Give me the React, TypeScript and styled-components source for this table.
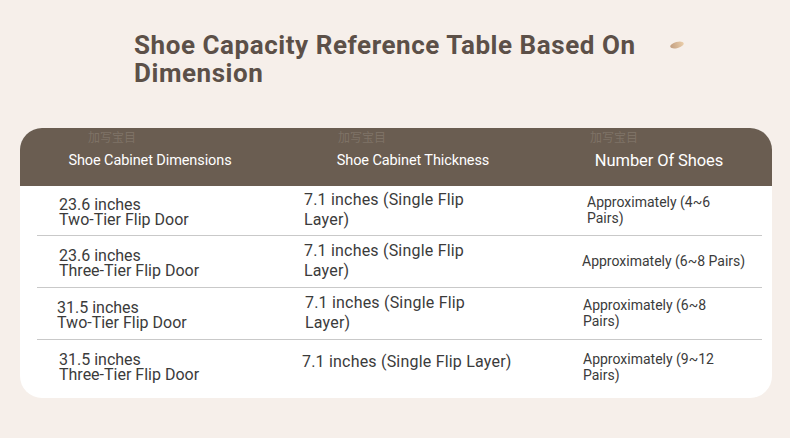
import React from "react";
import styled, { createGlobalStyle } from "styled-components";

const Global = createGlobalStyle`
  html, body { margin: 0; padding: 0; background: #f6efea; }
  body { font-family: Roboto, "Noto Sans", sans-serif; }
`;

const Page = styled.div`
  width: 790px;
  height: 438px;
  background: #f6efea;
  box-sizing: border-box;
  padding: 31px 18px 0 20px;
  display: flex;
  flex-direction: column;
`;

const TitleRow = styled.div`
  display: flex;
  align-items: flex-start;
  padding-left: 114px;
  height: 97px;
`;

const Title = styled.h1`
  margin: 0;
  font-family: Roboto, sans-serif;
  font-weight: 700;
  font-size: 26px;
  line-height: 28px;
  letter-spacing: 0.55px;
  color: #5c5048;
  width: 520px;
`;

const Smudge = styled.span`
  margin: 11px 0 0 16px;
  width: 14px;
  height: 6px;
  border-radius: 50%;
  background: linear-gradient(90deg, #b58a66, #e8c69a);
  opacity: 0.8;
  transform: rotate(-15deg);
`;

const Card = styled.div`
  width: 752px;
  height: 270px;
  background: #ffffff;
  border-radius: 22px;
  overflow: hidden;
  display: flex;
  flex-direction: column;
`;

const Header = styled.div`
  position: relative;
  height: 58px;
  background: #6a5d51;
  display: grid;
  grid-template-columns: 260px 266px 1fr;
  align-items: center;
  color: #ffffff;
`;

const HeadCell = styled.div<{ $size: number; $dy: number }>`
  text-align: center;
  font-size: ${(p) => p.$size}px;
  padding-top: ${(p) => p.$dy}px;
  letter-spacing: -0.1px;
`;

const Ghost = styled.span<{ $left: number }>`
  position: absolute;
  top: 2px;
  left: ${(p) => p.$left}px;
  font-family: "Noto Sans CJK SC", sans-serif;
  font-size: 12px;
  line-height: 13px;
  color: #7e7266;
`;

const Body = styled.div`
  display: flex;
  flex-direction: column;
  padding: 0 10px 0 17px;
`;

const Row = styled.div<{ $h: number; $last?: boolean }>`
  height: ${(p) => p.$h}px;
  display: grid;
  grid-template-columns: 243px 266px 1fr;
  align-items: center;
  border-bottom: ${(p) => (p.$last ? "none" : "1.5px solid #c9c9c9")};
  box-sizing: border-box;
  color: #3b3b3b;
`;

const SizeCell = styled.div<{ $pl: number; $dy: number }>`
  padding-left: ${(p) => p.$pl}px;
  margin-top: ${(p) => p.$dy}px;
  font-size: 16px;
  line-height: 15px;
  letter-spacing: 0px;
`;

const ThickCell = styled.div<{ $pl: number; $dy: number; $wide?: boolean }>`
  padding-left: ${(p) => p.$pl}px;
  margin-top: ${(p) => p.$dy}px;
  font-size: 16px;
  line-height: 20px;
  letter-spacing: 0.2px;
  width: ${(p) => (p.$wide ? 240 : 180)}px;
`;

const CountCell = styled.div<{ $pl: number; $dy: number; $wrap: boolean }>`
  padding-left: ${(p) => p.$pl}px;
  margin-top: ${(p) => p.$dy}px;
  font-size: 14px;
  line-height: 16px;
  letter-spacing: 0px;
  width: ${(p) => (p.$wrap ? 135 : 190)}px;
`;

const rows = [
  { h: 50, size: ["23.6 inches", "Two-Tier Flip Door"], s: [22, 2], t: [24, -1], c: [41, -1], wrap: true, count: "Approximately (4~6 Pairs)" },
  { h: 52, size: ["23.6 inches", "Three-Tier Flip Door"], s: [22, 2], t: [24, -1], c: [36, -2], wrap: false, count: "Approximately (6~8 Pairs)" },
  { h: 52, size: ["31.5 inches", "Two-Tier Flip Door"], s: [20, 2], t: [25, -1], c: [37, -1], wrap: true, count: "Approximately (6~8 Pairs)" },
  { h: 58, size: ["31.5 inches", "Three-Tier Flip Door"], s: [22, -5], t: [22, -14], c: [37, -5], wrap: true, count: "Approximately (9~12 Pairs)" },
];

export default function App() {
  return (
    <>
      <Global />
      <Page>
        <TitleRow>
          <Title>Shoe Capacity Reference Table Based On Dimension</Title>
          <Smudge />
        </TitleRow>
        <Card>
          <Header>
            <Ghost $left={68}>加写宝目</Ghost>
            <Ghost $left={318}>加写宝目</Ghost>
            <Ghost $left={570}>加写宝目</Ghost>
            <HeadCell $size={14.5} $dy={6}>Shoe Cabinet Dimensions</HeadCell>
            <HeadCell $size={14.5} $dy={7}>Shoe Cabinet Thickness</HeadCell>
            <HeadCell $size={16.5} $dy={7}>Number Of Shoes</HeadCell>
          </Header>
          <Body>
            {rows.map((r, i) => (
              <Row key={i} $h={r.h} $last={i === rows.length - 1}>
                <SizeCell $pl={r.s[0]} $dy={r.s[1]}>
                  {r.size[0]}
                  <br />
                  {r.size[1]}
                </SizeCell>
                <ThickCell $pl={r.t[0]} $dy={r.t[1]} $wide={i === 3}>
                  7.1 inches (Single Flip Layer)
                </ThickCell>
                <CountCell $pl={r.c[0]} $dy={r.c[1]} $wrap={r.wrap}>
                  {r.count}
                </CountCell>
              </Row>
            ))}
          </Body>
        </Card>
      </Page>
    </>
  );
}
